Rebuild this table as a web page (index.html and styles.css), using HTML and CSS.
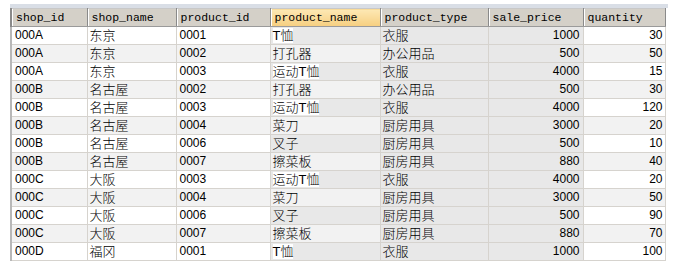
FILE: index.html
```html
<!DOCTYPE html>
<html>
<head>
<meta charset="utf-8">
<link rel="stylesheet" href="styles.css">
</head>
<body>
<div class="grid-wrap">
  <div class="topband"></div>
  <table class="grid">
    <colgroup>
      <col class="c1"><col class="c2"><col class="c3"><col class="c4"><col class="c5"><col class="c6"><col class="c7">
    </colgroup>
    <thead>
      <tr>
        <th>shop_id</th><th>shop_name</th><th>product_id</th><th class="hot">product_name</th><th>product_type</th><th>sale_price</th><th>quantity</th>
      </tr>
    </thead>
    <tbody>
      <tr class="odd"><td>000A</td><td class="zh">东京</td><td>0001</td><td class="zh pn"><span class="hl">T恤</span></td><td class="zh tint">衣服</td><td class="num tint">1000</td><td class="num">30</td></tr>
      <tr class="even"><td>000A</td><td class="zh">东京</td><td>0002</td><td class="zh pn">打孔器</td><td class="zh tint">办公用品</td><td class="num tint">500</td><td class="num">50</td></tr>
      <tr class="odd"><td>000A</td><td class="zh">东京</td><td>0003</td><td class="zh pn"><span class="hl">运动T恤</span></td><td class="zh tint">衣服</td><td class="num tint">4000</td><td class="num">15</td></tr>
      <tr class="even"><td>000B</td><td class="zh">名古屋</td><td>0002</td><td class="zh pn">打孔器</td><td class="zh tint">办公用品</td><td class="num tint">500</td><td class="num">30</td></tr>
      <tr class="odd"><td>000B</td><td class="zh">名古屋</td><td>0003</td><td class="zh pn"><span class="hl">运动T恤</span></td><td class="zh tint">衣服</td><td class="num tint">4000</td><td class="num">120</td></tr>
      <tr class="even"><td>000B</td><td class="zh">名古屋</td><td>0004</td><td class="zh pn">菜刀</td><td class="zh tint">厨房用具</td><td class="num tint">3000</td><td class="num">20</td></tr>
      <tr class="odd"><td>000B</td><td class="zh">名古屋</td><td>0006</td><td class="zh pn">叉子</td><td class="zh tint">厨房用具</td><td class="num tint">500</td><td class="num">10</td></tr>
      <tr class="even"><td>000B</td><td class="zh">名古屋</td><td>0007</td><td class="zh pn">擦菜板</td><td class="zh tint">厨房用具</td><td class="num tint">880</td><td class="num">40</td></tr>
      <tr class="odd"><td>000C</td><td class="zh">大阪</td><td>0003</td><td class="zh pn"><span class="hl">运动T恤</span></td><td class="zh tint">衣服</td><td class="num tint">4000</td><td class="num">20</td></tr>
      <tr class="even"><td>000C</td><td class="zh">大阪</td><td>0004</td><td class="zh pn">菜刀</td><td class="zh tint">厨房用具</td><td class="num tint">3000</td><td class="num">50</td></tr>
      <tr class="odd"><td>000C</td><td class="zh">大阪</td><td>0006</td><td class="zh pn">叉子</td><td class="zh tint">厨房用具</td><td class="num tint">500</td><td class="num">90</td></tr>
      <tr class="even"><td>000C</td><td class="zh">大阪</td><td>0007</td><td class="zh pn">擦菜板</td><td class="zh tint">厨房用具</td><td class="num tint">880</td><td class="num">70</td></tr>
      <tr class="odd"><td>000D</td><td class="zh">福冈</td><td>0001</td><td class="zh pn"><span class="hl">T恤</span></td><td class="zh tint">衣服</td><td class="num tint">1000</td><td class="num">100</td></tr>
    </tbody>
  </table>
</div>
</body>
</html>
```
FILE: styles.css
```css
html, body {
  margin: 0;
  padding: 0;
  background: #ffffff;
}

.grid-wrap {
  padding: 4px 0 0 10px;
}

.topband {
  width: 658px;
  height: 4px;
  background: #d9dee6;
}

.grid {
  border-collapse: collapse;
  table-layout: fixed;
  width: 654px;
  font-family: "Liberation Sans", "Noto Sans CJK SC", sans-serif;
  font-size: 12px;
  color: #000;
}

.c1 { width: 76px; }
.c2 { width: 89px; }
.c3 { width: 94px; }
.c4 { width: 110px; }
.c5 { width: 108px; }
.c6 { width: 95px; }
.c7 { width: 82px; }

.grid th {
  height: 17px;
  padding: 0 0 0 4px;
  text-align: left;
  font-family: "Liberation Mono", monospace;
  font-size: 11.5px;
  font-weight: normal;
  background: #d4d0c8;
  border-top: 1px solid #c8c8c8;
  border-bottom: 1px solid #9a9a9a;
  border-left: 1px solid #f0eee8;
  border-right: 1px solid #8a8a8a;
  box-shadow: inset 1px 0 0 #ffffff;
  white-space: nowrap;
  overflow: hidden;
}

.grid th:first-child {
  border-left: 2px solid #8a8a8a;
}

.grid th.hot {
  background: linear-gradient(#fde8b4, #f6cf80);
}

.grid td {
  height: 17px;
  padding: 0 0 0 3px;
  border: 1px solid #d6d3ce;
  white-space: nowrap;
  overflow: hidden;
  line-height: 17px;
}

.grid td:first-child {
  border-left: 2px solid #b8b8b8;
}

.grid td.zh {
  font-size: 13px;
  font-weight: 300;
  padding-left: 2px;
}

.grid td.num {
  text-align: right;
  padding: 0 3px 0 0;
}

.grid td.num:last-child {
  padding-right: 2px;
}

.odd td { background: #ffffff; }
.even td { background: #f2f2f2; }

.grid td.tint { background: #e8e8e8; }
.odd td.pn { background: #e8e8e8; }

.hl {
  background: #ffffff;
}
```
